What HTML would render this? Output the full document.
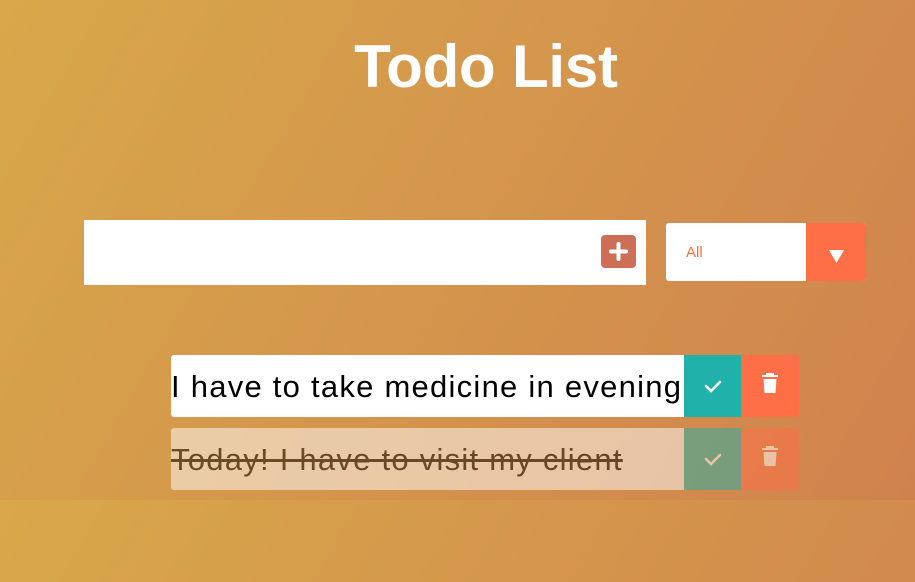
<!DOCTYPE html>
<html><head><style>
html,body{margin:0;padding:0}
html{background:linear-gradient(120deg,#d8a84a,#d0824e);background-size:915px 500px;height:582px;overflow:hidden}
body{width:915px;height:582px;position:relative;font-family:"Liberation Sans",sans-serif}
h1{position:absolute;left:0;width:972px;top:30px;margin:0;text-align:center;color:#fff;font-size:60px;font-weight:bold;letter-spacing:-0.2px;line-height:74px}
.inp{position:absolute;left:84px;top:220px;width:562px;height:65px;background:#fff}
.add{position:absolute;left:601px;top:235px;width:35px;height:33px;background:#cd6e57;border-radius:4px}
.sel{position:absolute;left:666px;top:223px;width:200px;height:58px;background:#fff;border-radius:3px;overflow:hidden}
.sel span{position:absolute;left:20px;top:21px;color:#ff6f47;font-size:15px}
.sel .ar{position:absolute;left:140px;top:0;width:60px;height:58px;background:#ff6f47}
.row{position:absolute;left:171px;width:628px;height:62px}
.txt{position:absolute;left:0;top:0;width:513px;height:62px;background:#fff;border-radius:3px 0 0 3px;font-size:31px;line-height:64px;color:#000;white-space:nowrap;letter-spacing:1.25px;overflow:hidden}
.chk{position:absolute;left:513px;top:0;width:57px;height:62px;background:#20b2aa}
.del{position:absolute;left:570px;top:0;width:58px;height:62px;background:#ff6f47}
.done{opacity:.5}
.done .txt{text-decoration:line-through}
</style></head><body>
<h1>Todo List</h1>
<div class="inp"></div>
<div class="add"><svg width="35" height="33"><path d="M17.5 9v15M10 16.5h15" stroke="#fff" stroke-width="4" stroke-linecap="round"/></svg></div>
<div class="sel"><span>All</span><div class="ar"><svg width="60" height="58"><path d="M23 27h15l-7.5 13z" fill="#fff"/></svg></div></div>
<div class="row" style="top:355px"><div class="txt">I have to take medicine in evening</div>
<div class="chk"><svg width="57" height="62"><path d="M22 31l5 5 9-9" stroke="#fff" stroke-width="2.6" fill="none" stroke-linecap="round"/></svg></div>
<div class="del"><svg width="58" height="62"><path d="M21 21h16M26 21v-2h6v2" stroke="#fff" stroke-width="2" fill="none"/><path d="M22.5 24h13l-1 14h-11z" fill="#fff"/></svg></div></div>
<div class="row done" style="top:428px"><div class="txt">Today! I have to visit my client</div>
<div class="chk"><svg width="57" height="62"><path d="M22 31l5 5 9-9" stroke="#fff" stroke-width="2.6" fill="none" stroke-linecap="round"/></svg></div>
<div class="del"><svg width="58" height="62"><path d="M21 21h16M26 21v-2h6v2" stroke="#fff" stroke-width="2" fill="none"/><path d="M22.5 24h13l-1 14h-11z" fill="#fff"/></svg></div></div>
</body></html>
